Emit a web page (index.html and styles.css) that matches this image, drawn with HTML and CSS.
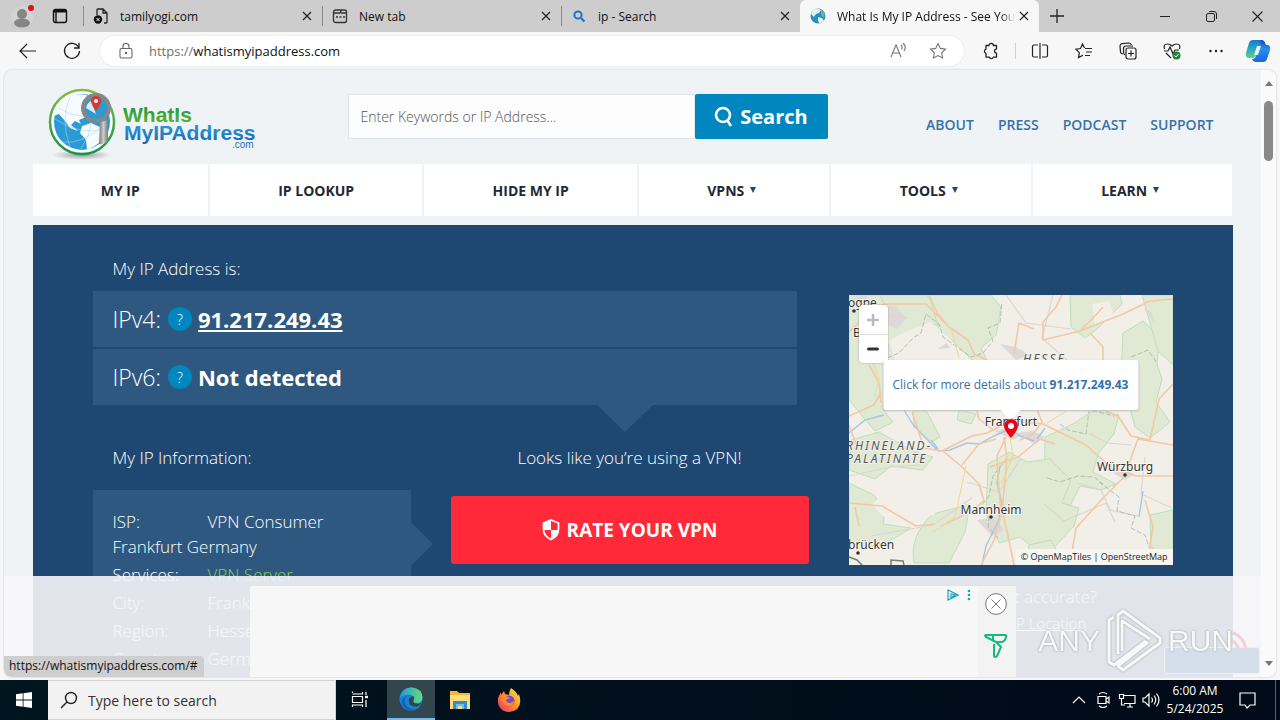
FILE: index.html
```html
<!DOCTYPE html>
<html lang="en">
<head>
<meta charset="utf-8">
<title>What Is My IP Address - See Your Public Address</title>
<link rel="stylesheet" href="styles.css">
</head>
<body>
<div class="tabstrip">
  <div class="strip-start">
    <button class="bare" aria-label="Profile"><svg width="24" height="28" viewBox="0 0 24 28"><circle cx="12" cy="15" r="11" fill="#d6d4d2"/><circle cx="12" cy="12" r="5" fill="#858585"/><ellipse cx="12" cy="21" rx="8" ry="4.5" fill="#858585"/><circle cx="21" cy="6" r="3" fill="#e3101b"/></svg></button>
    <button class="bare" aria-label="Tab actions"><svg width="16" height="16" viewBox="0 0 16 16" fill="none" stroke="#111" stroke-width="1.4"><rect x="1.500" y="1.500" width="13" height="13" rx="2"/><path d="M2 3h12" stroke-width="3"/><path d="M4 4v10"/></svg></button>
  </div>
  <div class="tab">
    <svg class="favicon" viewBox="0 0 16 16" fill="none" stroke="#222" stroke-width="1.300"><path d="M4 7V2q0-1 1-1h5l4 4v9q0 1-1 1h-2M10 1v4h4"/><circle cx="5" cy="11.500" r="4.200" fill="#111" stroke="none"/><path d="M3.500 10l3 3m0-3l-3 3" stroke="#fff" stroke-width="1"/></svg>
    <span class="tab-title">tamilyogi.com</span>
    <button class="bare tab-close" aria-label="Close tab"><svg width="10" height="10" viewBox="0 0 10 10"><path d="M1 1l8 8M9 1L1 9" stroke="#222" stroke-width="1.200"/></svg></button>
  </div>
  <div class="tab">
    <svg class="favicon" viewBox="0 0 16 16" fill="none" stroke="#333" stroke-width="1.300"><rect x="1.500" y="2" width="13" height="12.500" rx="2"/><path d="M2 5h6l1.500-3M9 5h5"/><path d="M4 9h2m1.500 0h2m1.500 0h2" stroke-width="1.600"/></svg>
    <span class="tab-title">New tab</span>
    <button class="bare tab-close" aria-label="Close tab"><svg width="10" height="10" viewBox="0 0 10 10"><path d="M1 1l8 8M9 1L1 9" stroke="#222" stroke-width="1.200"/></svg></button>
  </div>
  <div class="tab">
    <svg class="favicon" viewBox="0 0 16 16" fill="none" stroke="#2472c8"><circle cx="7" cy="7" r="3.600" stroke-width="2"/><path d="M10 10l3.500 3.500" stroke-width="2.200"/></svg>
    <span class="tab-title">ip - Search</span>
    <button class="bare tab-close" aria-label="Close tab"><svg width="10" height="10" viewBox="0 0 10 10"><path d="M1 1l8 8M9 1L1 9" stroke="#222" stroke-width="1.200"/></svg></button>
  </div>
  <div class="tab tab-active">
    <svg class="favicon" viewBox="0 0 16 16"><circle cx="8" cy="8" r="7.500" fill="#238fc2"/><path d="M3 2q4-3 8 0l-2 3-3 1-2 3-3-3zM8 9l4 1 2 3-4 3-2-3z" fill="#e4f1ee"/><path d="M11 1l4 4-1 5-3-3z" fill="#76ada5"/></svg>
    <span class="tab-title tab-fade">What Is My IP Address - See Your</span>
    <button class="bare tab-close" aria-label="Close tab"><svg width="10" height="10" viewBox="0 0 10 10"><path d="M1 1l8 8M9 1L1 9" stroke="#222" stroke-width="1.200"/></svg></button>
  </div>
  <button class="bare new-tab" aria-label="New tab"><svg width="14" height="14" viewBox="0 0 14 14"><path d="M7 0v14M0 7h14" stroke="#222" stroke-width="1.300"/></svg></button>
  <div class="window-controls">
    <button class="bare" aria-label="Minimize"><svg width="10" height="10" viewBox="0 0 10 10"><path d="M0 5.500h10" stroke="#222"/></svg></button>
    <button class="bare" aria-label="Restore"><svg width="11" height="11" viewBox="0 0 11 11" fill="none" stroke="#222"><rect x=".5" y="2.500" width="8" height="8" rx="1.500"/><path d="M3 .5h5q2.500 0 2.500 2.500v5"/></svg></button>
    <button class="bare" aria-label="Close window"><svg width="11" height="11" viewBox="0 0 11 11"><path d="M.5.5l10 10M10.500.5L.5 10.500" stroke="#222" stroke-width="1.100"/></svg></button>
  </div>
</div>

<div class="toolbar">
  <button class="bare tool" aria-label="Back"><svg width="18" height="16" viewBox="0 0 18 16" fill="none" stroke="#222" stroke-width="1.200"><path d="M17 8H1.500M8 1L1 8l7 7"/></svg></button>
  <button class="bare tool" aria-label="Refresh"><svg width="18" height="18" viewBox="0 0 18 18" fill="none" stroke="#222" stroke-width="1.300"><path d="M15.500 5A7.500 7.500 0 1 0 16.500 9M16 1v5h-5"/></svg></button>
  <div class="omnibox">
    <svg width="14" height="16" viewBox="0 0 14 16" fill="none" stroke="#666" stroke-width="1.100"><rect x="1" y="5.500" width="12" height="9.500" rx="1.500"/><path d="M4 5.500V3.500a3 3 0 0 1 6 0v2"/><circle cx="7" cy="10" r=".7" fill="#666"/></svg>
    <span class="url"><span class="scheme">https://</span>whatismyipaddress.com</span>
    <button class="bare" aria-label="Read aloud"><svg width="18" height="16" viewBox="0 0 18 16" fill="none" stroke="#777" stroke-width="1.100"><path d="M1 14L6 2l5 12M3 10h6M11 2q2 2 .5 4.500M13 0q4 3.500 1 8"/></svg></button>
    <button class="bare" aria-label="Add to favorites"><svg width="18" height="18" viewBox="0 0 18 18" fill="none" stroke="#777" stroke-width="1.100"><path d="M9 1.500l2.300 4.900 5.200.7-3.800 3.700.9 5.300L9 13.600l-4.600 2.500.9-5.300L1.500 7.100l5.200-.7z"/></svg></button>
  </div>
  <button class="bare tool" aria-label="Extensions"><svg width="18" height="18" viewBox="0 0 18 18" fill="none" stroke="#222" stroke-width="1.300" stroke-linejoin="round"><path d="M7 3.500a2.200 2.200 0 0 1 4.400 0h3.100v3.600a2 2 0 0 0 0 4v4h-3.200a2.100 2.100 0 0 1-4 0H4v-3.800a2.200 2.200 0 0 1 0-4.200V3.500z"/></svg></button>
  <span class="tool-divider"></span>
  <button class="bare tool" aria-label="Split screen"><svg width="18" height="16" viewBox="0 0 18 16" fill="none" stroke="#222" stroke-width="1.200"><path d="M9 0v16M7 2H3q-1.500 0-1.500 1.500v9Q1.500 14 3 14h4M11 2h4q1.500 0 1.500 1.500v9Q16.500 14 15 14h-4"/></svg></button>
  <button class="bare tool" aria-label="Favorites"><svg width="18" height="18" viewBox="0 0 18 18" fill="none" stroke="#222" stroke-width="1.200"><path d="M9.500 6L7.500 2 5.500 6.500.8 7.200l3.500 3.400-.8 5L8 13.200M10 6.500h7M11 10h6M10 13.500h5"/></svg></button>
  <button class="bare tool" aria-label="Collections"><svg width="18" height="18" viewBox="0 0 18 18" fill="none" stroke="#222" stroke-width="1.200"><path d="M4 12q-2 0-2.500-2L1 4q0-2 2-2.300L10 1q2 0 2.300 2M6 13q-1.500-1-1.500-3V6.500Q4.500 4 7 4h7"/><rect x="7" y="6" width="10" height="11" rx="2"/><path d="M12 8.500v6M9 11.500h6"/></svg></button>
  <button class="bare tool" aria-label="Browser essentials"><svg width="18" height="18" viewBox="0 0 18 18" fill="none" stroke="#222" stroke-width="1.200"><path d="M1.500 7Q0 2 4.500 2 7 2 9 4q2-2 4.500-2Q18 2 16.500 7M3 11l5 5M1 9h4l2-4 3 7 2-4h4"/><circle cx="13.500" cy="13.500" r="4" fill="#238238" stroke="none"/><path d="M11.500 13.500l1.500 1.500 2.500-3" stroke="#fff" stroke-width="1"/></svg></button>
  <button class="bare tool" aria-label="Settings and more"><svg width="14" height="4" viewBox="0 0 14 4" fill="#222"><circle cx="1.500" cy="2" r="1.200"/><circle cx="7" cy="2" r="1.200"/><circle cx="12.500" cy="2" r="1.200"/></svg></button>
  <button class="bare copilot" aria-label="Copilot"><svg width="26" height="24" viewBox="0 0 26 24"><defs><linearGradient id="cpa" x1="0" y1="0" x2="0" y2="1"><stop offset="0" stop-color="#1479cf"/><stop offset=".5" stop-color="#27a9c5"/><stop offset="1" stop-color="#62d27d"/></linearGradient><linearGradient id="cpb" x1="0" y1="0" x2="0" y2="1"><stop offset="0" stop-color="#1545b5"/><stop offset=".4" stop-color="#2690ea"/><stop offset="1" stop-color="#1767e0"/></linearGradient></defs><path d="M8 1h8q3 0 4 3l1 3h-4q-3 0-4 3l-2 6q-1 3-4 3H4q-4 0-3-5L4 4q1-3 4-3z" fill="url(#cpa)"/><path d="M15 1h1q3 0 4 3l1 2h1q4 0 3 5l-3 9q-1 3-4 3h-7q-3 0-4-3h1q2 0 3-3l3-8q1-3 4-3h-2z" fill="url(#cpb)"/><path d="M12 7h4l-3 9H9z" fill="#fff" opacity=".85"/></svg></button>
</div>

<div class="viewport">
  <div class="page">
    <header class="site-header">
      <a class="logo" href="#" aria-label="WhatIsMyIPAddress.com">
        <svg width="208" height="74" viewBox="0 0 208 74">
          <defs>
            <linearGradient id="lg" x1="0" y1="0" x2="0" y2="1"><stop offset=".3" stop-color="#2c9c3c"/><stop offset="1" stop-color="#6bb532"/></linearGradient>
            <linearGradient id="lb" x1="0" y1="0" x2="0" y2="1"><stop offset="0" stop-color="#25a7df"/><stop offset="1" stop-color="#1d63b5"/></linearGradient>
            <linearGradient id="ring" x1="0" y1="0" x2="0" y2="1"><stop offset="0" stop-color="#83bd45"/><stop offset="1" stop-color="#159447"/></linearGradient>
            <linearGradient id="metal" x1="0" y1="0" x2="1" y2="0"><stop offset="0" stop-color="#787878"/><stop offset=".5" stop-color="#ccc"/><stop offset="1" stop-color="#777"/></linearGradient>
            <radialGradient id="shade"><stop offset="0" stop-color="#777" stop-opacity=".7"/><stop offset="1" stop-color="#777" stop-opacity="0"/></radialGradient>
          </defs>
          <ellipse cx="34" cy="67" rx="30" ry="5" fill="url(#shade)"/>
          <circle cx="34" cy="34" r="32" fill="#fff" stroke="url(#ring)" stroke-width="2.500"/>
          <circle cx="34" cy="34" r="28" fill="#2b9bd8"/>
          <path d="M14 14Q24 4 38 7l6 4-6 7 4 6-4 5-7 3 2 4-6-3-4 4 7 6-8-3-5-7-6-7-6 2Q7 22 14 14zM34 38l9-3 9 4 7 7q-6 10-20 16l-1-10-6-7z" fill="#f7fbfd"/>
          <path d="M7 31q25 17 52 10M14 54q19 3 41-16M22 9q-10 22 0 50M39 6q12 28-6 55M10 20q24 15 49 3" fill="none" stroke="#a4d9f1" stroke-width=".7" opacity=".8"/>
          <path d="M52 34l8-2v21q-4 4-9 3z" fill="url(#metal)"/>
          <circle cx="48" cy="20" r="13" fill="#2e9acf" stroke="#858889" stroke-width="4"/>
          <path d="M38 20q2-8 9-8l4 4-6 2 3 8z" fill="#d7ecf5"/>
          <path d="M48 8a5 5 0 0 1 5 5q0 3-5 10-5-7-5-10a5 5 0 0 1 5-5z" fill="#df3430"/><circle cx="48" cy="13" r="2" fill="#fff"/>
          <text x="75" y="34" class="logo-text" font-size="21" fill="url(#lg)">WhatIs</text>
          <text x="76" y="52" class="logo-text" font-size="21" fill="url(#lb)">MyIPAddress</text>
          <text x="184" y="60" class="logo-dot" font-size="10" fill="#226fb8">.com</text>
        </svg>
      </a>
      <form class="search" onsubmit="return false">
        <input type="text" aria-label="Search" placeholder="Enter Keywords or IP Address...">
        <button type="submit"><svg width="20" height="22" viewBox="0 0 20 22" fill="none" stroke="#fff" stroke-width="2.600"><circle cx="9" cy="9" r="7"/><path d="M13 14l4 6"/></svg>Search</button>
      </form>
      <nav class="top-links"><a href="#">ABOUT</a><a href="#">PRESS</a><a href="#">PODCAST</a><a href="#">SUPPORT</a></nav>
    </header>
    <nav class="main-nav">
      <a href="#">MY IP</a><a href="#">IP LOOKUP</a><a href="#">HIDE MY IP</a>
      <a href="#">VPNS<i class="caret"></i></a><a href="#">TOOLS<i class="caret"></i></a><a href="#">LEARN<i class="caret"></i></a>
    </nav>
    <main class="hero">
      <div class="hero-main">
        <h2>My IP Address is:</h2>
        <div class="addresses">
          <div class="address"><span>IPv4:</span><button class="help" aria-label="About IPv4">?</button><a href="#">91.217.249.43</a></div>
          <div class="address"><span>IPv6:</span><button class="help" aria-label="About IPv6">?</button><strong>Not detected</strong></div>
        </div>
        <div class="details">
          <section class="info">
            <h2>My IP Information:</h2>
            <div class="info-box">
              <p><span class="key">ISP:</span>VPN Consumer Frankfurt Germany</p>
              <p><span class="key">Services:</span><span class="green">VPN Server</span></p>
              <p><span class="key">City:</span>Frankfurt am Main</p>
              <p><span class="key">Region:</span>Hesse</p>
              <p><span class="key">Country:</span>Germany</p>
            </div>
          </section>
          <section class="vpn">
            <h2>Looks like you’re using a VPN!</h2>
            <button class="rate"><svg width="18" height="22" viewBox="0 0 18 22"><path d="M9 1l7.500 3v6q0 7-7.500 10.500Q1.500 17 1.500 10V4z" fill="none" stroke="#fff" stroke-width="1.800"/><path d="M9 1v10H1.500V4zM9 11h7.500q-.5 6-7.500 9.500z" fill="#fff"/></svg>RATE YOUR VPN</button>
          </section>
        </div>
      </div>
      <aside class="location">
        <div class="map">
          <svg class="map-art" viewBox="0 0 324 270" preserveAspectRatio="xMidYMid slice">
            <rect width="324" height="270" fill="#f1efe8"/>
            <g fill="#e0e9d3" stroke="#bfdfb9" stroke-width="1">
              <path d="M0 0h78l24 35-18-6-10 16-26 17-12 17 8 24-12 9 12 15-18 9L0 105z"/>
              <path d="M80 0h62l10 12-5 28-15 13 6 12-13 2-20-20-15-12z"/>
              <path d="M221 0h50l2 9-25 25-12 9-14-11z"/>
              <path d="M274 38l20-12 17 16-3 27 5 15-6 23 14 20-20 16-15-11-7-27-18-7 11-19z"/>
              <path d="M293 0h31v70l-15-14z"/>
              <path d="M196 142l28-13 21-14 25 5-5 19-16 20-5 18 23 12-15 6-21-4-11 22-25 2z"/>
              <path d="M139 169l21-12 18 10 23-3 21 21-9 23 17 5-5 18-29 31-25-20-21 6-13-29z"/>
              <path d="M84 219l37-10-5 28-16 31H65q-5-28 19-49z"/>
              <path d="M64 111l14 6 13 25-10 6-16-17zM2 145l28-8 34 19 20 6-10 13-32-4-16 13-26-9z"/>
              <path d="M0 188l25 12 11 16-2 13 28 4-16 10-24 10-22-7z"/>
              <path d="M301 220l23-5v49l-22-6zM180 250l22-5 13 25h-38zM110 115l17 4-5 10-14-4z"/>
            </g>
            <g fill="#f2efe9"><path d="M24 210l13-18 18-9 27-2 22 3 2 18-22 18-22 6-29-5zM40 45l26-12 15-6 21 17-8 13-25 10-23-1zM243 9l17-3 6 17-20 7z"/></g>
            <g fill="#dcd9d8"><path d="M4 2l13-1 9 12-9 5zM30 14l15-4 13 13-10 11-13-6zM5 32l14 4 3 17-10 3zM31 44l10 6-3 14-8-3zM151 49l16 3 14 8-14 5zM145 136l13-3 13 7-6 5zM166 138l18-2 12 6-10 7zM128 225l18-3 9 13-12 6zM264 178l12-3 9 5-9 5zM295 13l8 5 2 10zM88 54l10-6 3 5z"/></g>
            <g fill="none" stroke="#dcd6cf" stroke-width="1.200">
              <path d="M0 181l42-9 29-2M31 0l10 21 18 2M22 241l62-11 39-27M157 0l20 28 45 6M204 0l-11 43 35 31M228 188l24 7 9 20 28 6M195 209l20 17 42-18 9 19M172 163l-22 34-32-10M241 139l18 9 23 2M296 162l-4 37 31 14"/>
            </g>
            <g fill="none" stroke="#a8c7df" stroke-width="1.400">
              <path d="M53 112l12 19 10 10 14 15 12-1 17-7 12 1 17-9 14-6 10 7 14 5M151 171l-3 17 5 21-4 18-12 24-4 19M89 154l-7-9M188 144l8-11M294 196l-4 26M0 138l16-13 19-5"/>
            </g>
            <g fill="none" stroke="#acaeac" stroke-width=".8" stroke-dasharray="5 2">
              <path d="M38 63l12-5 14-15 8-5 5-19 13 10 4 13 28 20 12-4 10-12-5-13 12-5 2-21M211 129l8 6 18 4 3-24 25 6M198 183l13 4 18-6 16 1 9 7M158 163l-14 18-4 20-9 12 9 9-1 10 10 11M250 187l20 15-2 14 18 5-4 12 14 7 8 23M282 62l17-7 9 13"/>
            </g>
            <g fill="none" stroke="#f4c7a5" stroke-width="1.600" stroke-linejoin="round">
              <path d="M0 37l17-17 18-11h42l23 23 19 13 6 14 26 12M0 121l25-11 7-13M0 208l33 3 34 20 19-2M80 0l8 18 11 13M213 0l-6 12-13 15v18l37-9 43-17 27-13 23-2M231 36l14-14 9-10M241 38l13 14v22M324 89l-14 15-9 41-19-4-13-20-12-5M324 150l-35-6-14 38-20 20-28 31-6 37M94 156l18 15 18 18 5 17-14 11-29 14M63 117l12 36 18 3 30-15 15-3 23-12 33 3 43 21 21 19 29 12h55M157 142l-9 19 1 20 2 27 7 28 7 34M155 142l3 22-5 53-8 28-13 25M125 106l5 18 15 12M171 145l13-6 9-12-6-15M141 172l28-10 22-18 15 5M113 170l17-21 17-5M185 34l-15-6-5 31M0 130l8 22M10 231l-4-19M296 205l8 27-3 18 19 20M20 70l10 18 2 20"/>
            </g>
            <g fill="none" stroke="#f2d792" stroke-width="1"><path d="M26 101l4-17-8-21M117 171l-11 51-22 15M161 142l3 19-11 27M102 32l8 31M198 128l24-15"/></g>
            <g fill="none" stroke="#787c76" stroke-width="1.500"><path d="M0 262l8 3 5 5M42 270v-5l12 1 1 4"/></g>
            <g class="map-label">
              <text x="-1" y="12">ogne</text><text x="4" y="42">B</text>
              <text x="162" y="131" text-anchor="middle">Frankfurt</text>
              <text x="276" y="176" text-anchor="middle">Würzburg</text>
              <text x="142" y="219" text-anchor="middle">Mannheim</text>
              <text x="-1" y="254">brücken</text>
            </g>
            <g class="map-region"><text x="174" y="68">HESSE</text><text x="-3" y="155">RHINELAND-</text><text x="-3" y="168">PALATINATE</text></g>
            <g fill="#333"><circle cx="5" cy="16" r="1.800"/><circle cx="276" cy="180" r="1.800"/><circle cx="142" cy="222" r="1.800"/><circle cx="9" cy="258" r="1.800"/></g>
          </svg>
          <div class="zoom"><button aria-label="Zoom in" disabled><svg width="12" height="12" viewBox="0 0 12 12"><path d="M6 0v12M0 6h12" stroke="#bbb" stroke-width="2.500"/></svg></button><button aria-label="Zoom out"><svg width="12" height="12" viewBox="0 0 12 12"><path d="M1.500 6h9" stroke="#333" stroke-width="3" stroke-linecap="round"/></svg></button></div>
          <a class="popup" href="#">Click for more details about <b>91.217.249.43</b></a>
          <svg class="pin" viewBox="0 0 14 19"><path d="M7 0a7 7 0 0 1 7 7q0 4-7 12Q0 11 0 7a7 7 0 0 1 7-7z" fill="#f00013"/><circle cx="7" cy="7" r="3" fill="#fff"/></svg>
          <div class="credit">© OpenMapTiles | OpenStreetMap</div>
        </div>
        <p>Location not accurate?</p>
        <a class="update" href="#">Update My IP Location</a>
      </aside>
    </main>
  </div>
  <div class="scrollbar"><i class="arrow-up"></i><i class="thumb"></i><i class="arrow-down"></i></div>
  <div class="ad-bar">
    <div class="ad">
      <div class="ad-choices"><svg width="12" height="12" viewBox="0 0 12 12" fill="none" stroke="#12a7ba" stroke-width="1.200"><path d="M1 1l10 5L1 11zM4 4v5M5 5l3 1-3 2"/></svg><svg width="4" height="12" viewBox="0 0 4 12" fill="#12a7ba"><circle cx="2" cy="2" r="1.300"/><circle cx="2" cy="6" r="1.300"/><circle cx="2" cy="10" r="1.300"/></svg></div>
      <div class="ad-side">
        <button class="bare" aria-label="Close ad"><svg width="22" height="22" viewBox="0 0 22 22" fill="none" stroke="#777"><circle cx="11" cy="11" r="10.400" fill="#fff"/><path d="M6.500 6.500l9 9M15.500 6.500l-9 9"/></svg></button>
        <svg width="24" height="26" viewBox="0 0 24 26" fill="none" stroke="#16b884" stroke-width="2" stroke-linejoin="round"><path d="M2 2h19q2 0 1 2-1 5-5 5h-5L2 4q-2-2 0-2zM9 2v6M10 11v12q1 2 3 0l4-9-5-5"/></svg>
      </div>
    </div>
  </div>
  <div class="ghost-box"></div>
  <svg class="ghost-signal" width="24" height="24" viewBox="0 0 24 24" fill="none" stroke="#eed3d8" stroke-width="3"><path d="M2 3q16 1 19 18M2 10q9 1 12 11"/></svg>
  <div class="watermark">
    <span>ANY</span>
    <svg width="56" height="64" viewBox="0 0 56 64" fill="none" stroke="#f8f9fa" stroke-width="3" stroke-linejoin="round"><path d="M12 45V6l5-4 37 27v5L17 61l-5-4 30-24M8 8L3 11v42l5 3 32-24M16 42V12l28 18"/></svg>
    <span>RUN</span>
  </div>
  <div class="status">https://whatismyipaddress.com/#</div>
</div>

<footer class="taskbar">
  <button class="bare start" aria-label="Start"><svg width="16" height="16" viewBox="0 0 16 16" fill="#fff"><path d="M0 2.300L6.700 1.300v6.300H0zM7.500 1.200L16 0v7.600H7.500zM0 8.400h6.700v6.300L0 13.700zM7.500 8.400H16V16l-8.500-1.200z"/></svg></button>
  <label class="task-search"><svg width="18" height="18" viewBox="0 0 18 18" fill="none" stroke="#222" stroke-width="1.400"><circle cx="11" cy="7" r="5.500"/><path d="M7 11l-6 6"/></svg><input type="text" aria-label="Type here to search" placeholder="Type here to search"></label>
  <button class="bare task task-view" aria-label="Task view"><svg width="18" height="18" viewBox="0 0 18 18" fill="none" stroke="#fff" stroke-width="1.200"><path d="M1.500 2V.5M1.500 3h10V1M1.500 5.500h10v6h-10zM1.500 16v-2h10v2M15 1v3M15 9v7"/><path d="M14 6h3" stroke-width="2.400"/></svg></button>
  <button class="bare task task-active" aria-label="Microsoft Edge"><svg width="24" height="24" viewBox="0 0 24 24"><defs><linearGradient id="eg" x1="0" y1="0" x2="1" y2="0"><stop offset="0" stop-color="#249bde"/><stop offset="1" stop-color="#66dc79"/></linearGradient></defs><circle cx="12" cy="12" r="11.500" fill="#1387d4"/><path d="M1 11Q3 0 13 .5q10 1 10.500 10-.5 6-7 6-4-1-1.500-4 0-5-6-5-5 0-8 3.500z" fill="url(#eg)"/><path d="M9 8q-5 4-2 10 4 6 11 3-8 5-14-2Q0 12 9 8z" fill="#1262b5"/><path d="M14 9q2 2 .5 4-1 3 3 3.500 4 .5 5-1-2 5-8 4-6-2-4.500-8z" fill="#33454d"/></svg></button>
  <button class="bare task" aria-label="File Explorer"><svg width="22" height="20" viewBox="0 0 22 20"><path d="M1 1h7l2 2h11v16H1z" fill="#f2b83b"/><path d="M1 5h20v14H1z" fill="#ffdc75"/><path d="M4 11h14v8h-4v-4H8v4H4z" fill="#2f8dd0"/><path d="M7 14h8v5h-2v-3H9v3H7z" fill="#72bde8"/></svg></button>
  <button class="bare task" aria-label="Firefox"><svg width="24" height="24" viewBox="0 0 24 24"><defs><linearGradient id="ff" x1="1" y1="0" x2="0" y2="1"><stop offset="0" stop-color="#fff34b"/><stop offset=".45" stop-color="#ff9724"/><stop offset="1" stop-color="#f0247b"/></linearGradient></defs><path d="M14 0q6 4 7 8l1-2q5 16-10 18Q0 23 1 10l3-6v3l3-4 1 3 4 1q0-4 2-7z" fill="url(#ff)"/><circle cx="12" cy="13" r="5.500" fill="#7946d0"/><path d="M5 8q5-1 8 3-4-1-4 2 3 4 8 0-1 8-9 4-4-3-3-9z" fill="#ff8a20"/></svg></button>
  <div class="tray">
    <svg viewBox="0 0 18 18"><path d="M3 12l6-6 6 6"/></svg>
    <svg viewBox="0 0 18 18"><path d="M5 3q4-3 8 0M5 15q4 3 8 0M4 5.500h8v7H4zM12 8l3-2v6l-3-2"/></svg>
    <svg viewBox="0 0 18 18"><path d="M6 4.500h11v8H6M9 16h6M12 12.500V16M1.500 3.500h4v4h-4zM3.500 8v6H7"/></svg>
    <svg viewBox="0 0 18 18"><path d="M1 7h2l4-4v12l-4-4H1zM9.500 6.500q2 2.500 0 5M12 4.500q3.500 4.500 0 9M14.500 2.500q5 6.500 0 13"/></svg>
  </div>
  <div class="clock"><span>6:00 AM</span><span>5/24/2025</span></div>
  <button class="bare notice" aria-label="Notifications"><svg width="17" height="17" viewBox="0 0 17 17" fill="none" stroke="#fff" stroke-width="1.200"><path d="M1 1h15v12h-5l-3 3-2-3H1z"/></svg></button>
  <span class="peek"></span>
</footer>
</body>
</html>
```

FILE: styles.css
```css
* { box-sizing: border-box; }
body {
  margin: 0;
  height: 100vh;
  display: flex;
  flex-direction: column;
  overflow: hidden;
  background: #f7f7f7;
  font-family: "Open Sans", "Noto Sans", sans-serif;
  font-size: 12px;
  color: #111;
}
button, input { font-family: inherit; }
h2, p { margin: 0; font-weight: 300; }
.bare {
  display: flex;
  align-items: center;
  justify-content: center;
  border: 0;
  padding: 0;
  background: none;
}
svg { display: block; flex: none; }

/* Browser chrome */
.tabstrip { display: flex; height: 32px; flex: none; background: #cdcdcd; }
.strip-start { width: 83px; flex: none; display: flex; align-items: center; gap: 18px; padding-left: 10px; }
.tab {
  flex: 0 1 239px;
  min-width: 0;
  display: flex;
  align-items: center;
  position: relative;
  padding: 0 10px;
}
.tab:not(.tab-active)::before {
  content: "";
  position: absolute;
  left: 0;
  top: 6px;
  width: 1px;
  height: 20px;
  background: #8b8b8b;
}
.tab-active { background: #f7f7f7; border-radius: 6px 6px 0 0; }
.favicon { width: 16px; height: 16px; margin-right: 11px; }
.tab-title { flex: 1; min-width: 0; overflow: hidden; white-space: nowrap; }
.tab-fade { -webkit-mask-image: linear-gradient(to right, #000 92%, transparent); mask-image: linear-gradient(to right, #000 92%, transparent); }
.tab-close { width: 10px; height: 20px; margin-left: 4px; }
.new-tab { width: 36px; }
.window-controls { margin-left: auto; display: flex; }
.window-controls .bare { width: 46px; }
.toolbar { display: flex; align-items: center; flex: none; height: 38px; padding: 0 2px 0 6px; }
.tool { width: 44px; height: 32px; }
.omnibox {
  flex: 1;
  min-width: 0;
  height: 30px;
  margin: 0 5px 0 6px;
  padding: 0 17px 0 19px;
  border-radius: 15px;
  background: #fff;
  display: flex;
  align-items: center;
  gap: 16px;
  box-shadow: 0 0 2px #ddd;
}
.omnibox .bare { margin-left: 5px; }
.url { flex: 1; font-size: 13px; }
.scheme { color: #707070; }
.tool-divider { width: 1px; height: 16px; margin: 0 2px; background: #cfcfcf; }
.copilot { width: 40px; height: 32px; }

/* Page area */
.viewport {
  position: relative;
  flex: 1;
  min-height: 0;
  margin: 0 4px 3px;
  display: flex;
  border-radius: 8px;
  overflow: hidden;
  background: #f0f3f5;
  box-shadow: 0 0 2px #bbb;
}
.page { flex: 1; min-width: 0; padding: 0 28px; overflow: hidden; }
.site-header, .main-nav, .hero { max-width: 1200px; margin: 0 auto; }
.site-header { display: flex; height: 94px; align-items: flex-start; padding: 18px 19px 0 15px; }
.logo-text { font-family: "Liberation Sans", sans-serif; font-weight: bold; }
.logo-dot { font-family: "Liberation Sans", sans-serif; }
.search { display: flex; width: 480px; height: 45px; margin: 6px 0 0 92px; }
.search input {
  flex: 1;
  min-width: 0;
  border: 1px solid #e2e5e8;
  background: #fdfdfd;
  padding: 0 12px;
  font-size: 14px;
  font-weight: 300;
}
.search input::placeholder { color: #555; opacity: 1; }
.search button {
  width: 133px;
  border: 0;
  border-radius: 2px;
  background: #0087bf;
  color: #fff;
  font-size: 20px;
  font-weight: 700;
  display: flex;
  align-items: center;
  justify-content: center;
  gap: 6px;
}
.top-links { margin: 27px 0 0 auto; display: flex; gap: 24px; }
.top-links a { font-size: 14px; line-height: 20px; font-weight: 600; color: #3772ac; text-decoration: none; }
.main-nav { display: flex; gap: 2px; height: 52px; }
.main-nav a {
  flex: 1 1 auto;
  display: flex;
  align-items: center;
  justify-content: center;
  background: #fff;
  color: #212936;
  font-size: 14px;
  font-weight: 700;
  text-decoration: none;
}
.caret { margin: 0 5px 0 6px; border: solid transparent; border-width: 6px 3px 0; border-top-color: #1e4772; }
.hero {
  margin-top: 9px;
  min-height: 500px;
  padding: 0 60px;
  display: flex;
  gap: 40px;
  background: #1e4772;
  color: #fff;
}
.hero-main { flex: 1; min-width: 0; padding-top: 32px; }
.hero h2 { font-size: 17px; line-height: 24px; }
.hero-main > h2 { padding-left: 20px; }
.addresses { margin: 10px 12px 0 0; display: grid; gap: 2px; position: relative; }
.addresses::after {
  content: "";
  position: absolute;
  top: 100%;
  right: 144px;
  border: solid transparent;
  border-width: 27px 28px 0;
  border-top-color: #2e587f;
}
.address {
  height: 56px;
  padding-left: 20px;
  background: #2e587f;
  display: flex;
  align-items: center;
  font-size: 23px;
  font-weight: 300;
}
.address a, .address strong { color: #fff; font-size: 22px; font-weight: 700; text-underline-offset: 2px; }
.help { width: 24px; height: 24px; margin: 0 6px 0 7px; padding: 0; border: 0; border-radius: 50%; background: #0087bf; color: #fff; font-size: 14px; font-weight: 300; }
.details { display: grid; grid-template-columns: 318px 1fr; gap: 40px; margin-top: 41px; }
.info h2 { padding-left: 20px; }
.info-box { position: relative; margin-top: 20px; padding: 19px 20px; height: 240px; background: #2e587f; }
.info-box::after {
  content: "";
  position: absolute;
  left: 100%;
  top: 32px;
  border: solid transparent;
  border-width: 22px 0 22px 22px;
  border-left-color: #2e587f;
}
.info-box p { font-size: 17px; line-height: 25px; margin-bottom: 3px; }
.key { display: inline-block; width: 95px; }
.green { color: #82d252; }
.vpn h2 { text-align: center; }
.rate {
  width: 100%;
  height: 68px;
  margin-top: 26px;
  border: 0;
  border-radius: 3px;
  background: #ff2939;
  color: #fff;
  font-size: 19px;
  font-weight: 700;
  display: flex;
  align-items: center;
  justify-content: center;
  gap: 7px;
}
.location { width: 324px; flex: none; padding-top: 70px; text-align: center; }
.location p { font-size: 17px; line-height: 24px; margin-top: 20px; }
.update { color: #fff; font-size: 15px; line-height: 28px; font-weight: 300; }
.map { position: relative; height: 270px; overflow: hidden; }
.map-art { width: 100%; height: 100%; }
.map-label { font-size: 12px; fill: #333; stroke: #f8f6f0; stroke-width: 2px; paint-order: stroke; font-family: "Noto Sans", sans-serif; }
.map-region { font-size: 12px; font-style: italic; letter-spacing: 2px; fill: #555; stroke: #f3f1eb; stroke-width: 2px; paint-order: stroke; font-family: "Noto Sans", sans-serif; }
.zoom { position: absolute; left: 10px; top: 10px; width: 29px; border-radius: 4px; background: #fff; box-shadow: 0 0 2px #999; }
.zoom button { width: 29px; height: 29px; padding: 0; border: 0; background: none; display: flex; align-items: center; justify-content: center; }
.zoom button + button { border-top: 1px solid #ddd; }
.popup {
  position: absolute;
  left: 50%;
  top: 65px;
  transform: translateX(-50%);
  width: 255px;
  height: 50px;
  line-height: 50px;
  border-radius: 3px;
  background: #fff;
  color: #3471aa;
  font-size: 12px;
  white-space: nowrap;
  text-decoration: none;
  box-shadow: 0 1px 2px #bbb;
}
.popup::after { content: ""; position: absolute; top: 100%; left: 50%; margin-left: -10px; border: solid transparent; border-width: 10px 10px 0; border-top-color: #fff; }
.pin { position: absolute; left: 155px; top: 124px; width: 14px; height: 19px; }
.credit { position: absolute; right: 0; bottom: 0; padding: 0 5px; line-height: 16px; background: #f7f5f0; color: #222; font-size: 9px; }
.scrollbar { width: 15px; flex: none; background: #fafafa; display: flex; flex-direction: column; align-items: center; padding: 11px 0; }
.arrow-up { border: solid transparent; border-width: 0 4px 5px; border-bottom-color: #777; }
.arrow-down { margin-top: auto; border: solid transparent; border-width: 5px 4px 0; border-top-color: #777; }
.thumb { width: 9px; height: 60px; margin-top: 15px; border-radius: 5px; background: #898989; }

/* Overlays on the page */
.ad-bar { position: absolute; left: 0; right: 15px; bottom: 0; height: 101px; padding-top: 10px; background: rgba(246, 246, 248, 0.9); }
.ad { width: 766px; height: 91px; margin: 0 auto; background: #f7f7f7; display: flex; justify-content: flex-end; }
.ad-choices { display: flex; gap: 8px; padding: 3px 7px 0 0; }
.ad-side { width: 38px; display: flex; flex-direction: column; align-items: center; gap: 18px; padding: 7px 2px 0 0; background: #f3f3f3; }
.ghost-box { position: absolute; right: 16px; bottom: 3px; width: 96px; height: 27px; border: 1px solid #edf1f6; border-radius: 3px; background: #d4dfeb; }
.ghost-signal { position: absolute; right: 27px; bottom: 24px; }
.watermark { position: absolute; right: 43px; bottom: 4px; display: flex; align-items: center; gap: 6px; filter: drop-shadow(0 0 1px #999); }
.watermark span { font-family: "Liberation Sans", sans-serif; font-size: 30px; line-height: 64px; color: #f8f9fa; }
.status { position: absolute; left: 0; bottom: 0; height: 21px; line-height: 20px; padding: 0 6px 0 5px; border-radius: 0 4px 0 7px; background: #cecece; color: #111; }

/* Taskbar */
.taskbar { display: flex; flex: none; height: 40px; background: linear-gradient(to right, #00151f, #000a18); color: #fff; }
.start, .task { width: 48px; }
.task-search { display: flex; align-items: center; gap: 10px; width: 288px; padding-left: 12px; background: #f2f2f2; border: 1px solid #d2d2d2; border-width: 1px 1px 1px 0; }
.task-search input { flex: 1; min-width: 0; border: 0; padding: 0; background: none; font-size: 14px; }
.task-search input::placeholder { color: #333; opacity: 1; }
.task { margin-right: 1px; }
.task-view { margin-right: 3px; }
.task-active { background: #33454d; border-bottom: 2px solid #76b9ed; }
.tray { margin-left: auto; display: flex; align-items: center; gap: 6px; }
.tray svg { width: 18px; height: 18px; fill: none; stroke: #fff; stroke-width: 1.2px; }
.clock { width: 70px; display: flex; flex-direction: column; align-items: center; justify-content: center; line-height: 18px; font-size: 12px; }
.notice { width: 34px; }
.peek { width: 1px; margin: 0 4px 0 11px; background: #59616b; }
```
